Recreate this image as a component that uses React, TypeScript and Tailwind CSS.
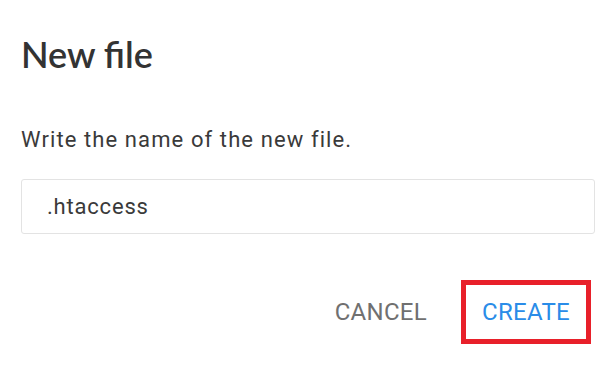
import { useState } from 'react'

export default function App() {
  const [name, setName] = useState('.htaccess')

  return (
    <div className="h-[372px] w-[616px] bg-white px-[21px] font-['Roboto',sans-serif]">
      <h1 className="pt-[33px] font-['Lato',sans-serif] text-[36px] font-semibold leading-[42px] text-[#333333]">
        New file
      </h1>
      <p className="mt-[52px] text-[22px] leading-[26px] tracking-[1.1px] text-[#3a3a3a]">
        Write the name of the new file.
      </p>
      <input
        className="mt-[26px] block h-[55px] w-full rounded-[3px] border border-[#e3e3e3] px-[25px] text-[22px] tracking-[0.8px] text-[#3a3a3a] outline-none"
        value={name}
        onChange={(e) => setName(e.target.value)}
      />
      <div className="mt-[46px] flex items-center justify-end gap-[18px] pr-[4px]">
        <button
          type="button"
          className="px-[16px] py-[15px] text-[24px] leading-[26px] tracking-[0.3px] text-[#707070]"
        >
          CANCEL
        </button>
        <button
          type="button"
          className="border-[5px] border-[#e8202a] px-[16px] py-[14px] text-[24px] leading-[26px] tracking-[0.3px] text-[#2a8ce8]"
        >
          CREATE
        </button>
      </div>
    </div>
  )
}
